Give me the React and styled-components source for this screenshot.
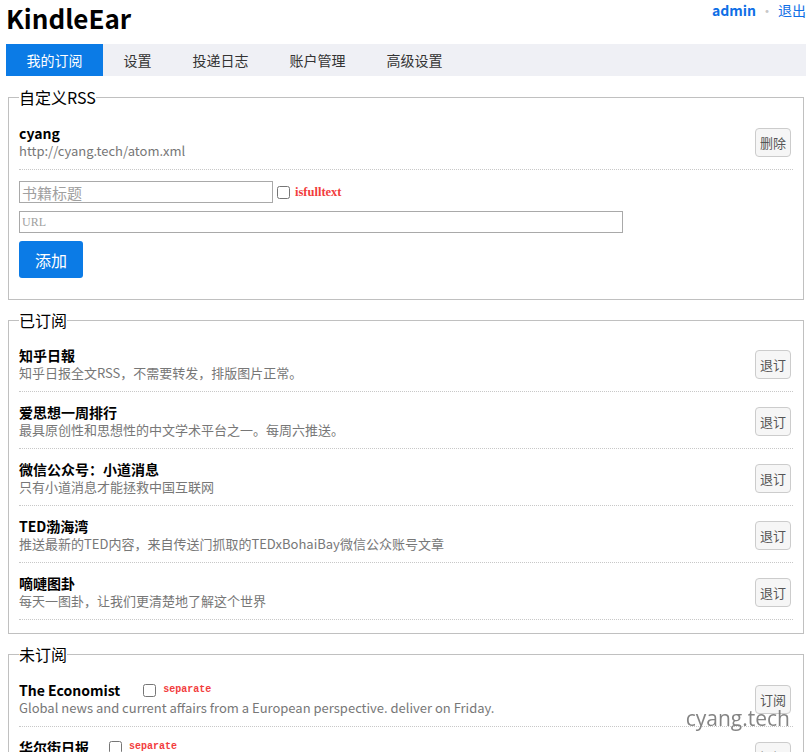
import styled, { createGlobalStyle } from 'styled-components';

const GlobalStyle = createGlobalStyle`
  body {
    margin: 0;
    background: #fff;
    font-family: "Noto Sans CJK SC", "Open Sans", sans-serif;
    color: #000;
  }
`;

const Page = styled.div`
  padding: 0 4px 0 6px;
`;

const Header = styled.div`
  display: flex;
  justify-content: space-between;
  align-items: flex-start;
  height: 44px;
`;

const Logo = styled.h1`
  margin: 0;
  font-size: 26px;
  line-height: 36px;
  font-weight: bold;
`;

const UserBox = styled.div`
  font-size: 14px;
  line-height: 20px;
  color: #0f6fe6;
  display: flex;
  align-items: center;
  gap: 4px;
`;

const UserName = styled.span`
  font-weight: bold;
`;

const Dot = styled.span`
  color: #c8c8c8;
  font-size: 14px;
`;

const Nav = styled.div`
  display: flex;
  background: #eff0f5;
  height: 32px;
`;

const Tab = styled.div`
  padding: 0 20.5px;
  font-size: 14px;
  line-height: 32px;
  color: ${p => (p.active ? '#fff' : '#333')};
  background: ${p => (p.active ? '#0b7be6' : 'transparent')};
`;

const Box = styled.fieldset`
  margin: ${p => p.top || 10}px 2px 0;
  padding: 0 10px ${p => p.bottom || 13}px;
  border: 1px solid #c0c0c0;
`;

const Legend = styled.legend`
  font-size: 16px;
  line-height: 22px;
  padding: 0;
  margin-left: 0;
`;

const List = styled.div`
  margin-top: ${p => p.top || 5}px;
`;

const Row = styled.div`
  display: flex;
  align-items: center;
  justify-content: space-between;
  padding: 11px 0 9px;
  border-bottom: 1px dotted #c8c8c8;
`;

const Info = styled.div`
  display: flex;
  flex-direction: column;
`;

const TitleLine = styled.div`
  display: flex;
  align-items: center;
  font-size: 14px;
  line-height: 18px;
  font-weight: bold;
`;

const Desc = styled.div`
  font-size: 13px;
  line-height: 18px;
  color: #777;
`;

const SmallButton = styled.button`
  width: 36px;
  height: 29px;
  padding: 0;
  margin-right: 2px;
  font-family: inherit;
  font-size: 13px;
  color: #555;
  background: #f6f6f6;
  border: 1px solid #ccc;
  border-radius: 4px;
`;

const Check = styled.input.attrs({ type: 'checkbox' })`
  margin: 0 0 0 ${p => p.gap || 4}px;
  width: 13px;
  height: 13px;
`;

const Tag = styled.span`
  margin-left: ${p => (p.mono ? 7 : 5)}px;
  color: #f23d3d;
  font-weight: bold;
  font-size: ${p => (p.mono ? 10 : 12.5)}px;
  font-family: ${p => (p.mono ? '"Liberation Mono", monospace' : '"Liberation Serif", serif')};
`;

const Form = styled.div`
  margin-top: 11px;
  display: flex;
  flex-direction: column;
  gap: 8px;
  align-items: flex-start;
`;

const FieldRow = styled.div`
  display: flex;
  align-items: center;
`;

const TextInput = styled.input`
  box-sizing: border-box;
  width: ${p => p.width}px;
  height: 22px;
  padding: 0 2px;
  border: 1px solid #a9a9a9;
  font-family: ${p => (p.serif ? '"Liberation Serif", serif' : 'inherit')};
  font-size: ${p => (p.serif ? 12 : 15)}px;
  &::placeholder {
    color: #a0a0a0;
  }
`;

const AddButton = styled.button`
  width: 64px;
  height: 37px;
  background: #0b7be6;
  color: #fff;
  border: none;
  border-radius: 3px;
  font-family: inherit;
  font-size: 16px;
`;

const Watermark = styled.div`
  position: fixed;
  right: 20px;
  bottom: 20px;
  font-size: 21px;
  color: rgba(110, 110, 110, 0.85);
  font-family: "Open Sans", sans-serif;
`;

const subscribed = [
  ['知乎日報', '知乎日报全文RSS，不需要转发，排版图片正常。'],
  ['爱思想一周排行', '最具原创性和思想性的中文学术平台之一。每周六推送。'],
  ['微信公众号：小道消息', '只有小道消息才能拯救中国互联网'],
  ['TED渤海湾', '推送最新的TED内容，来自传送门抓取的TEDxBohaiBay微信公众账号文章'],
  ['嘀嗹图卦', '每天一图卦，让我们更清楚地了解这个世界'],
];

const available = [
  ['The Economist', 'Global news and current affairs from a European perspective. deliver on Friday.', 23],
  ['华尔街日报', '华尔街日报中文网，每日精选新闻。', 20],
];

export default function App() {
  return (
    <Page>
      <GlobalStyle />
      <Header>
        <Logo>KindleEar</Logo>
        <UserBox>
          <UserName>admin</UserName>
          <Dot>•</Dot>
          <span>退出</span>
        </UserBox>
      </Header>
      <Nav>
        <Tab active>我的订阅</Tab>
        <Tab>设置</Tab>
        <Tab>投递日志</Tab>
        <Tab>账户管理</Tab>
        <Tab>高级设置</Tab>
      </Nav>

      <Box bottom={21}>
        <Legend>自定义RSS</Legend>
        <List>
          <Row>
            <Info>
              <TitleLine>cyang</TitleLine>
              <Desc>http://cyang.tech/atom.xml</Desc>
            </Info>
            <SmallButton>删除</SmallButton>
          </Row>
        </List>
        <Form>
          <FieldRow>
            <TextInput width={254} placeholder="书籍标题" />
            <Check />
            <Tag>isfulltext</Tag>
          </FieldRow>
          <TextInput width={604} serif placeholder="URL" />
          <AddButton>添加</AddButton>
        </Form>
      </Box>

      <Box top={9}>
        <Legend>已订阅</Legend>
        <List top={4}>
          {subscribed.map(([t, d]) => (
            <Row key={t}>
              <Info>
                <TitleLine>{t}</TitleLine>
                <Desc>{d}</Desc>
              </Info>
              <SmallButton>退订</SmallButton>
            </Row>
          ))}
        </List>
      </Box>

      <Box top={9}>
        <Legend>未订阅</Legend>
        <List>
          {available.map(([t, d, gap]) => (
            <Row key={t}>
              <Info>
                <TitleLine>
                  {t}
                  <Check gap={gap} />
                  <Tag mono>separate</Tag>
                </TitleLine>
                <Desc>{d}</Desc>
              </Info>
              <SmallButton>订阅</SmallButton>
            </Row>
          ))}
        </List>
      </Box>
      <Watermark>cyang.tech</Watermark>
    </Page>
  );
}
